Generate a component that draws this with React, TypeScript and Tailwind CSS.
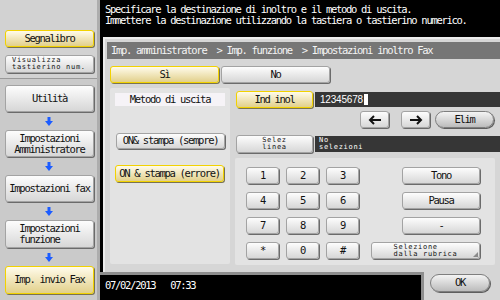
import type { ReactNode } from 'react'

type Tone = 'gray' | 'yellow' | 'pill'

const TONES: Record<Tone, string> = {
  gray: 'rounded-[3px] border border-[#a3a3a3] bg-linear-to-b from-[#fdfdfd] to-[#d7d7d7] shadow-[1px_1px_0_#6b6b6b]',
  yellow:
    'rounded-[3px] border border-[#f2d200] bg-linear-to-b from-[#fffbea] to-[#e2d08a] shadow-[1px_1px_0_#7a7350]',
  pill: 'rounded-full border border-[#7e7e7e] bg-linear-to-b from-[#f4f4f4] to-[#bcbcbc] shadow-[1px_1px_0_#5e5e5e]',
}

// tiny two-line captions (squeezed like the panel's own font)
const SMALL = 'text-[7px] leading-[7px] tracking-[0.7px]'

function Btn({ tone = 'gray', className = '', children }: { tone?: Tone; className?: string; children: ReactNode }) {
  return (
    <div className={`flex shrink-0 items-center justify-center text-center ${TONES[tone]} ${className}`}>
      {children}
    </div>
  )
}

function DownArrow() {
  return (
    <div className="flex h-[18px] items-center justify-center">
      <svg width="8" height="9" viewBox="0 0 8 9">
        <rect x="2.5" y="0" width="3" height="4.5" fill="#1c5cff" />
        <path d="M0 4 H8 L4 9 Z" fill="#1c5cff" />
      </svg>
    </div>
  )
}

function Sidebar() {
  return (
    <div className="flex w-[100px] shrink-0 flex-col border-r-[3px] border-[#adadad] bg-[#cacaca]">
      <div className="flex h-[79px] flex-col border-b border-[#9a9a9a] bg-[#d2d2d2] px-[5px] pt-[30px]">
        <Btn tone="yellow" className="h-[17px] w-[89px]">
          Segnalibro
        </Btn>
        <Btn className={`mt-[8px] h-[18px] w-[89px] flex-col !items-start pl-[6px] text-left ${SMALL}`}>
          <span>Visualizza</span>
          <span>tastierino num.</span>
        </Btn>
      </div>
      <div className="flex flex-col px-[5px] pt-[6px]">
        <Btn className="h-[27px] w-[89px]">Utilità</Btn>
        <DownArrow />
        <Btn className="h-[27px] w-[89px] flex-col leading-[11px]">
          <span>Impostazioni</span>
          <span>Amministratore</span>
        </Btn>
        <DownArrow />
        <Btn className="h-[27px] w-[89px]">Impostazioni fax</Btn>
        <DownArrow />
        <Btn className="h-[28px] w-[89px]">
          <div className="flex flex-col items-start text-left leading-[11px]">
            <span>Impostazioni</span>
            <span>funzione</span>
          </div>
        </Btn>
        <DownArrow />
        <Btn tone="yellow" className="h-[28px] w-[89px]">
          Imp. invio Fax
        </Btn>
      </div>
    </div>
  )
}

function Key({ label }: { label: string }) {
  return <Btn className="h-[17px] w-[33px]">{label}</Btn>
}

const ROWS: { keys: string[]; side: ReactNode; wide?: boolean }[] = [
  { keys: ['1', '2', '3'], side: 'Tono' },
  { keys: ['4', '5', '6'], side: 'Pausa' },
  { keys: ['7', '8', '9'], side: '-' },
  {
    keys: ['*', '0', '#'],
    wide: true,
    side: (
      <span className={`flex flex-col items-start ${SMALL}`}>
        <span>Selezione</span>
        <span>dalla rubrica</span>
      </span>
    ),
  },
]

function Keypad() {
  return (
    <div className="mr-[5px] mt-[5px] flex h-[107px] flex-col gap-[8px] rounded-[2px] bg-[#e3e3e3] pl-[11px] pr-[15px] pt-[9px]">
      {ROWS.map((row, i) => (
        <div key={i} className="flex items-center">
          <div className="flex gap-[7px]">
            {row.keys.map((k) => (
              <Key key={k} label={k} />
            ))}
          </div>
          <div className="flex-1" />
          <Btn className={`relative h-[17px] ${row.wide ? 'w-[109px]' : 'w-[78px]'}`}>
            {row.side}
            {row.wide && (
              <span className="absolute bottom-[1px] right-[1px] h-0 w-0 border-b-[5px] border-l-[5px] border-b-[#8a8a8a] border-l-transparent" />
            )}
          </Btn>
        </div>
      ))}
    </div>
  )
}

function Panel() {
  return (
    <div className="ml-[3px] flex flex-1 flex-col border-l-2 border-t-2 border-[#ececec] bg-[#d6d6d6] pl-[2px] pt-[3px]">
      <div className="flex h-[17px] items-center whitespace-pre bg-[#767676] pl-[4px] text-[#f4f4f4]">
        Imp. amministratore  &gt; Imp. funzione  &gt; Impostazioni inoltro Fax
      </div>

      <div className="ml-[3px] mt-[7px] flex gap-[2px]">
        <Btn tone="yellow" className="h-[17px] w-[109px]">
          Sì
        </Btn>
        <Btn className="h-[17px] w-[109px]">No</Btn>
      </div>

      <div className="mt-[5px] flex">
        <div className="ml-[3px] flex h-[176px] w-[120px] flex-col rounded-[2px] bg-[#e3e3e3] pl-[5px] pt-[5px]">
          <div className="flex h-[13px] w-[110px] items-center justify-center bg-[#f6f3f7]">Metodo di uscita</div>
          <Btn className="ml-[1px] mt-[27px] h-[16px] w-[109px] whitespace-pre">ON&amp; stampa (sempre)</Btn>
          <Btn tone="yellow" className="mt-[16px] h-[17px] w-[109px] whitespace-pre">
            ON &amp; stampa (errore)
          </Btn>
        </div>

        <div className="ml-[5px] flex flex-1 flex-col">
          <div className="mt-[3px] flex items-center gap-[2px] pl-[1px]">
            <Btn tone="yellow" className="h-[17px] w-[77px]">
              Ind inol
            </Btn>
            <div className="flex h-[15px] flex-1 items-center bg-[#363636] pl-[5px] font-['Liberation_Sans',sans-serif] text-[10px] tracking-[-0.2px] text-white">
              12345678
              <span className="ml-[1px] h-[11px] w-[4px] bg-white" />
            </div>
          </div>

          <div className="mt-[3px] flex items-center">
            <Btn className="ml-[125px] h-[17px] w-[29px]">
              <svg width="14" height="10" viewBox="0 0 14 10">
                <path d="M13 5 H2 M6 1 L2 5 L6 9" stroke="#111" strokeWidth="2" fill="none" />
              </svg>
            </Btn>
            <Btn className="ml-[12px] h-[17px] w-[29px]">
              <svg width="14" height="10" viewBox="0 0 14 10">
                <path d="M1 5 H12 M8 1 L12 5 L8 9" stroke="#111" strokeWidth="2" fill="none" />
              </svg>
            </Btn>
            <Btn tone="pill" className="ml-[5px] h-[17px] w-[59px]">
              Elim
            </Btn>
          </div>

          <div className="mt-[7px] flex items-center gap-[2px] pl-[1px]">
            <Btn className={`h-[18px] w-[77px] flex-col ${SMALL}`}>
              <span>Selez</span>
              <span>linea</span>
            </Btn>
            <div className={`flex h-[16px] flex-1 flex-col justify-center bg-[#363636] pl-[4px] text-white ${SMALL}`}>
              <span>No</span>
              <span>selezioni</span>
            </div>
          </div>

          <Keypad />
        </div>
      </div>
    </div>
  )
}

export default function App() {
  return (
    <div className="flex h-[300px] w-[500px] overflow-hidden bg-black font-['DejaVu_Sans_Mono','Liberation_Mono',monospace] text-[10.5px] tracking-[-1.3px] text-[#111]">
      <Sidebar />
      <div className="flex flex-1 flex-col">
        <div className="h-[37px] pl-[5px] pt-[4px] leading-[11px] text-white">
          <p>Specificare la destinazione di inoltro e il metodo di uscita.</p>
          <p>Immettere la destinazione utilizzando la tastiera o tastierino numerico.</p>
        </div>
        <Panel />
        <div className="flex h-[28px] shrink-0">
          <div className="flex flex-1 items-center gap-[15px] border-t-[3px] border-[#8e8e8e] bg-black pb-[3px] pl-[5px] text-white">
            <span>07/02/2013</span>
            <span>07:33</span>
          </div>
          <div className="flex w-[79px] items-start border-l-[3px] border-[#8e8e8e] bg-[#d6d6d6] pl-[6px] pt-[2px]">
            <Btn tone="pill" className="h-[18px] w-[60px]">
              OK
            </Btn>
          </div>
        </div>
      </div>
    </div>
  )
}
